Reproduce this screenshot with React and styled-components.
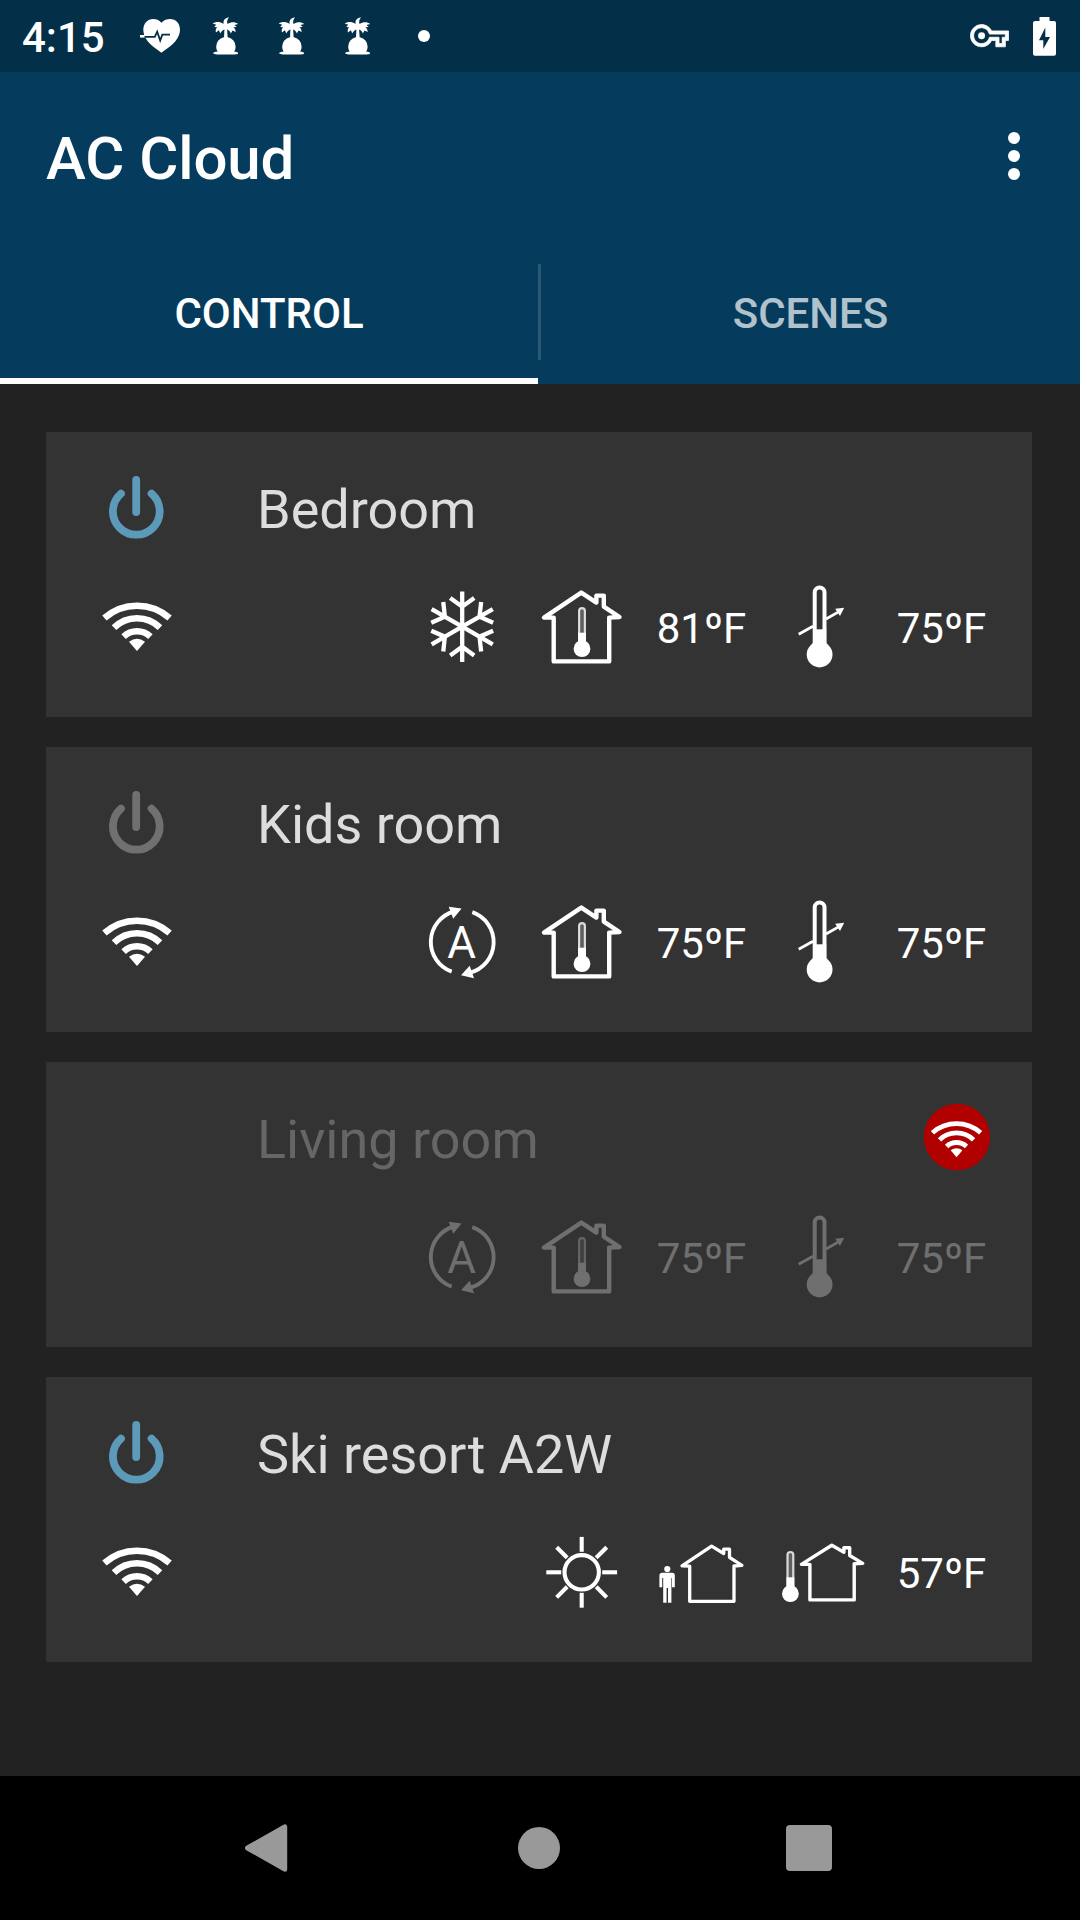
import React from "react";
import styled, { createGlobalStyle } from "styled-components";

const GlobalStyle = createGlobalStyle`
  * { box-sizing: border-box; }
  body { margin: 0; background: #222222; font-family: Roboto, "Noto Sans", sans-serif; }
  svg { display: block; flex: none; }
`;

const Screen = styled.div`
  width: 1080px;
  height: 1920px;
  display: flex;
  flex-direction: column;
  background: #222222;
  color: #ffffff;
  overflow: hidden;
`;

const StatusBar = styled.header`
  height: 72px;
  display: flex;
  align-items: center;
  padding: 0 24px 0 22px;
  background: #042f49;
`;

const Clock = styled.span`
  width: 105px;
  padding-top: 4px;
  font-size: 42px;
  line-height: 68px;
  font-weight: 500;
  white-space: nowrap;
`;

const SystemIcons = styled.div`
  margin-left: auto;
  display: flex;
  align-items: center;
  gap: 24px;
`;

const AppBar = styled.div`
  height: 168px;
  display: flex;
  align-items: center;
  justify-content: space-between;
  padding: 0 30px 0 46px;
  background: #053c5d;
`;

const Title = styled.h1`
  margin: 0;
  padding-top: 6px;
  font-size: 60px;
  line-height: 70px;
  font-weight: 500;
  letter-spacing: -0.1px;
`;

const MenuButton = styled.button`
  width: 72px;
  height: 96px;
  padding: 0;
  border: 0;
  background: none;
  display: flex;
  flex-direction: column;
  align-items: center;
  justify-content: center;
  gap: 6px;
`;

const MenuDot = styled.i`
  width: 12px;
  height: 12px;
  border-radius: 50%;
  background: #ffffff;
`;

const Tabs = styled.nav`
  height: 144px;
  display: grid;
  grid-template-columns: 538px 3px 1fr;
  background: #053c5d;
`;

const Tab = styled.div`
  display: flex;
  align-items: center;
  justify-content: center;
  padding-top: 8px;
  border-bottom: 6px solid ${(p) => (p.$active ? "#ffffff" : "transparent")};
  color: ${(p) => (p.$active ? "#ffffff" : "rgba(255, 255, 255, 0.7)")};
  font-size: 42px;
  font-weight: 500;
`;

const TabDivider = styled.div`
  height: 96px;
  margin-top: 24px;
  background: #2b5773;
`;

const DeviceList = styled.main`
  flex: 1;
  display: flex;
  flex-direction: column;
  gap: 30px;
  padding: 48px 48px 0 46px;
`;

const Card = styled.section`
  height: 285px;
  padding: 15px 30px;
  background: #333333;
  color: ${(p) => (p.$offline ? "#6f6f6f" : "#ffffff")};
`;

const CardRow = styled.div`
  height: 120px;
  display: flex;
  align-items: center;
`;

const Slot = styled.div`
  flex: none;
  width: 120px;
  height: 120px;
  display: flex;
  align-items: center;
  justify-content: center;
`;

const DeviceName = styled.h2`
  flex: 1;
  margin: 0;
  padding: 5px 0 0 61px;
  font-size: 54px;
  line-height: 66px;
  font-weight: 400;
  color: ${(p) => (p.$offline ? "#666666" : "#dddddd")};
`;

const Spacer = styled.div`
  flex: 1;
`;

const Temperature = styled.span`
  padding: 4px 1px 0 0;
  font-size: 42px;
  line-height: 60px;
  white-space: nowrap;
`;

const NavBar = styled.footer`
  height: 144px;
  display: flex;
  align-items: center;
  justify-content: center;
  padding-right: 2px;
  background: #000000;
`;

const NavItem = styled.div`
  width: 270px;
  display: flex;
  justify-content: center;
`;

const Glyph = ({ size = 120, children, ...rest }) => (
  <svg width={size} height={size} viewBox="0 0 120 120" fill="none" stroke="currentColor" {...rest}>
    {children}
  </svg>
);

const PowerIcon = ({ on }) => (
  <Glyph color={on ? "#5c9ab9" : "#707070"} strokeWidth="7.8" strokeLinecap="round">
    <path d="M60.2 33V65" />
    <path d="M45 46.6A23.4 23.4 0 1 0 75.6 46.6" />
  </Glyph>
);

const WifiShape = () => (
  <>
    <g strokeWidth="6.5">
      <path d="M28.4 51A49.2 49.2 0 0 1 93.6 51" />
      <path d="M38 60.6A32.7 32.7 0 0 1 84 60.6" />
      <path d="M47.6 69.6A19.4 19.4 0 0 1 74.4 69.6" />
    </g>
    <path d="M53 74.8Q61 68.8 69 74.8L61 84Z" fill="currentColor" stroke="none" />
  </>
);

const WifiIcon = () => (
  <Glyph color="#ffffff">
    <WifiShape />
  </Glyph>
);

const OfflineBadge = () => (
  <Glyph color="#ffffff">
    <circle cx="74.9" cy="60" r="33.2" fill="#b10000" stroke="none" />
    <g transform="translate(29.4 18) scale(0.74)">
      <WifiShape />
    </g>
  </Glyph>
);

const CoolIcon = () => (
  <Glyph strokeWidth="4.3">
    {[0, 60, 120, 180, 240, 300].map((a) => (
      <path key={a} transform={`translate(60.2 59.7) rotate(${a})`} d="M0 0V-35.3M-12 -28.8L0 -20L12 -28.8" />
    ))}
  </Glyph>
);

const SunIcon = () => (
  <Glyph strokeWidth="4.1">
    <circle cx="59.7" cy="60.3" r="17.2" />
    {[0, 45, 90, 135, 180, 225, 270, 315].map((a) => (
      <path key={a} transform={`translate(59.7 60.3) rotate(${a})`} d="M0 -20.5V-35.4" />
    ))}
  </Glyph>
);

const AutoIcon = () => (
  <Glyph strokeWidth="3.9">
    <path d="M49.7 89.7A31.6 31.6 0 0 1 52 29.5" />
    <path d="M70.3 30.2A31.6 31.6 0 0 1 67.5 90.8" />
    <path d="M59.6 26.6L46.7 24.7L51.2 36.7ZM59 93.2L72 96.3L67.7 83.8Z" fill="currentColor" stroke="none" />
    <text
      x="59.7"
      y="75.8"
      fontSize="44"
      fontFamily="Roboto, sans-serif"
      textAnchor="middle"
      fill="currentColor"
      stroke="none"
    >
      A
    </text>
  </Glyph>
);

const SmallThermometer = ({ x, top, level, bulb }) => (
  <>
    <rect x={x - 2.9} y={top + 1} width="5.8" height={bulb - top} rx="2.9" strokeWidth="2.2" strokeOpacity="0.8" fill="currentColor" fillOpacity="0.22" />
    <rect x={x - 3.9} y={level} width="7.8" height={bulb - level} fill="currentColor" stroke="none" />
    <circle cx={x} cy={bulb} r="8.4" fill="currentColor" stroke="none" />
  </>
);

const IndoorIcon = () => (
  <Glyph strokeWidth="4.4" strokeLinejoin="round">
    <path d="M59.3 25.6L22 50.6H31.7V94.4H87.2V50.6L97.5 50L81.8 39.6V28.6H74.4V35.6Z" />
    <SmallThermometer x={60} top={40.2} level={65.7} bulb={81.7} />
  </Glyph>
);

const TargetIcon = () => (
  <Glyph>
    <path d="M36.7 67.3L51 59.2M64 52L77 44.6" strokeWidth="2.8" />
    <path d="M82.2 40.8L73.2 41.8L78 49Z" fill="currentColor" stroke="none" />
    <path d="M52.7 78V25.3A4.9 4.9 0 0 1 62.5 25.3V78" strokeWidth="4" />
    <rect x="51" y="62.3" width="13.2" height="18" fill="currentColor" stroke="none" />
    <circle cx="57.6" cy="87.5" r="12.9" fill="currentColor" stroke="none" />
  </Glyph>
);

const PresenceIcon = () => (
  <Glyph strokeWidth="3.3" strokeLinejoin="round">
    <path d="M69.6 34.2L40 53.8L47.7 54.2V89.3H92V54L99.9 53.4L87.5 45.3V37.2H81.7V41.5Z" />
    <g fill="currentColor" stroke="none">
      <circle cx="25.3" cy="57" r="3.1" />
      <path d="M20.3 60.8H30.3Q32.8 60.8 32.8 63.5V75.3H30V66H29.4V90.7H26V76H24.6V90.7H21.2V66H20.2V75.3H17.4V63.5Q17.4 60.8 20.3 60.8Z" />
    </g>
  </Glyph>
);

const OutdoorIcon = () => (
  <Glyph strokeWidth="3.4" strokeLinejoin="round">
    <path d="M69.8 33.2L39.4 52.4H47.9V87.9H92.2V51.7L100.7 51.4L87.7 43.5V35.8H81.9V40.2Z" />
    <SmallThermometer x={28.4} top={39} level={65.3} bulb={81.7} />
  </Glyph>
);

const StatusGlyph = ({ x, y, children }) => (
  <svg width="66" height="72" viewBox="0 0 66 72" fill="#ffffff">
    <g transform={`translate(${x} ${y})`}>{children}</g>
  </svg>
);

const HeartNotice = () => (
  <StatusGlyph x={13} y={18}>
    <path d="M21.4 4.7C24 1.8 27 1 30 1C36 1 40 5.6 40 11.6C40 20 34 26.5 21.4 34.7C9 26.5 3.3 20 3.3 11.6C3.3 5.6 7.5 1 13.2 1C16.3 1 19 2 21.4 4.7Z" />
    <path d="M0 18.3H5" stroke="#ffffff" strokeWidth="2.6" />
    <path d="M4.5 18.9H14.8L17.2 13.6L20.2 22.6L22.3 16.7H30" fill="none" stroke="#042f49" strokeWidth="1.8" />
  </StatusGlyph>
);

const PalmNotice = () => (
  <StatusGlyph x={18.7} y={16}>
    <path d="M17.3 1.2C12.5 2 11.3 5 12 8C8 5.5 4 5.6 1 7.6L4.5 8.8L2.500 11L5.5 11.3C4 12.6 3.8 14.4 4.2 16.6L7.2 14.2L8.6 17.6C9.6 15.4 11 14.2 12.7 13.6L12.3 22H16L15.4 13.6C17 14.2 18.4 15.4 19.2 17.6L20.8 14.6L24 16C23.8 13.6 23 12.2 21.6 11.3L25 11L22.8 9L26.5 8C23.5 5.6 19.5 5.6 15.8 8C15 5.5 15.6 3.5 17.3 1.2Z" />
    <path d="M4.5 30.5A9.7 9.7 0 0 1 12 21.2H16.4A9.7 9.7 0 0 1 23.9 30.5C23.9 32.5 23.3 34.4 22.4 35.8C25 35.8 26.4 36.4 26.4 37.2C26.4 38 25 38.4 23 38.4H5C3 38.4 1.6 38 1.6 37.2C1.6 36.4 3 35.8 6 35.8C5 34.4 4.5 32.5 4.5 30.5Z" />
  </StatusGlyph>
);

const DotNotice = () => (
  <StatusGlyph x={33} y={36}>
    <circle r="6" />
  </StatusGlyph>
);

const KeyIcon = () => (
  <svg width="39" height="26" viewBox="-0.3 4 24.6 16.4" fill="#ffffff">
    <path
      d="M22 19h-6v-4h-2.68c-1.14 2.42-3.6 4-6.32 4-3.86 0-7-3.14-7-7s3.14-7 7-7c2.72 0 5.17 1.58 6.32 4H24v6h-2v4zm-4-2h2v-4h2v-2H11.94l-.23-.67C11.01 8.34 9.11 7 7 7c-2.76 0-5 2.24-5 5s2.24 5 5 5c2.11 0 4.01-1.34 4.71-3.33l.23-.67H18v4z"
      stroke="#ffffff"
      strokeWidth="0.5"
    />
    <circle cx="7" cy="12" r="2.2" />
  </svg>
);

const BatteryIcon = () => (
  <svg width="23" height="39" viewBox="0 0 23 39" fillRule="evenodd" fill="#ffffff">
    <path d="M6.5 0H16.5V4H21Q23 4 23 6V36.7Q23 38.7 21 38.7H2Q0 38.7 0 36.7V6Q0 4 2 4H6.5ZM12.3 10.5L6 23.3H10.3V32L17 20H12.3Z" />
  </svg>
);

const devices = [
  { name: "Bedroom", power: "on", wifi: true, items: [<CoolIcon />, <IndoorIcon />, "81ºF", <TargetIcon />, "75ºF"] },
  { name: "Kids room", power: "off", wifi: true, items: [<AutoIcon />, <IndoorIcon />, "75ºF", <TargetIcon />, "75ºF"] },
  { name: "Living room", offline: true, items: [<AutoIcon />, <IndoorIcon />, "75ºF", <TargetIcon />, "75ºF"] },
  { name: "Ski resort A2W", power: "on", wifi: true, items: [<SunIcon />, <PresenceIcon />, <OutdoorIcon />, "57ºF"] },
];

const DeviceCard = ({ name, power, wifi, offline, items }) => (
  <Card $offline={offline}>
    <CardRow>
      <Slot>{power && <PowerIcon on={power === "on"} />}</Slot>
      <DeviceName $offline={offline}>{name}</DeviceName>
      {offline && (
        <Slot>
          <OfflineBadge />
        </Slot>
      )}
    </CardRow>
    <CardRow>
      <Slot>{wifi && <WifiIcon />}</Slot>
      <Spacer />
      {items.map((item, i) => (
        <Slot key={i}>{typeof item === "string" ? <Temperature>{item}</Temperature> : item}</Slot>
      ))}
    </CardRow>
  </Card>
);

export default function App() {
  return (
    <Screen>
      <GlobalStyle />
      <StatusBar>
        <Clock>4:15</Clock>
        <HeartNotice />
        <PalmNotice />
        <PalmNotice />
        <PalmNotice />
        <DotNotice />
        <SystemIcons>
          <KeyIcon />
          <BatteryIcon />
        </SystemIcons>
      </StatusBar>
      <AppBar>
        <Title>AC Cloud</Title>
        <MenuButton aria-label="More options">
          <MenuDot />
          <MenuDot />
          <MenuDot />
        </MenuButton>
      </AppBar>
      <Tabs>
        <Tab $active>CONTROL</Tab>
        <TabDivider />
        <Tab>SCENES</Tab>
      </Tabs>
      <DeviceList>
        {devices.map((d) => (
          <DeviceCard key={d.name} {...d} />
        ))}
      </DeviceList>
      <NavBar>
        <NavItem>
          <svg width="48" height="48" viewBox="2 0 48 48" fill="#999999" stroke="#999999" strokeWidth="5" strokeLinejoin="round">
            <path d="M4.5 24L41.7 2.8V45.2Z" />
          </svg>
        </NavItem>
        <NavItem>
          <svg width="42" height="42" viewBox="0 0 42 42" fill="#999999">
            <circle cx="21" cy="21" r="21" />
          </svg>
        </NavItem>
        <NavItem>
          <svg width="46" height="46" viewBox="0 0 46 46" fill="#999999">
            <rect width="46" height="46" rx="4" />
          </svg>
        </NavItem>
      </NavBar>
    </Screen>
  );
}
